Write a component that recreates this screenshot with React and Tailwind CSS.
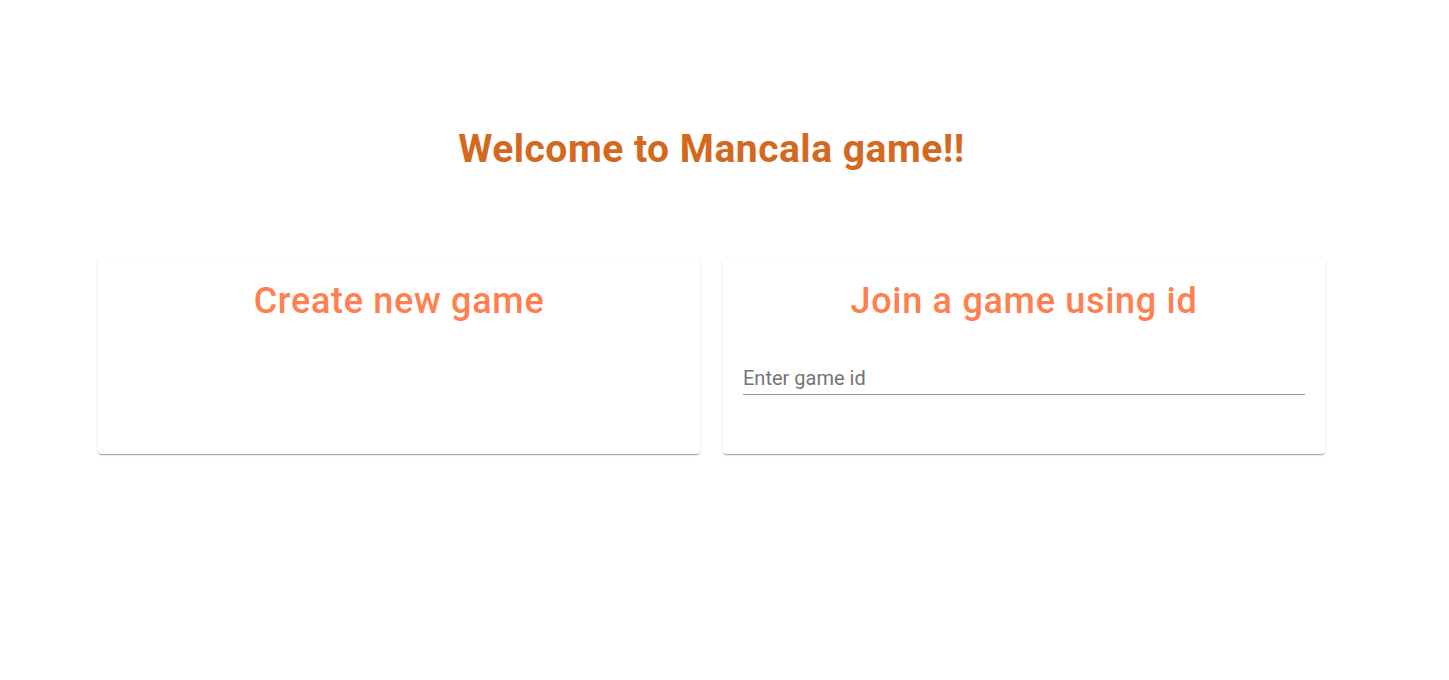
import React from 'react';

const Card = ({ children }) => (
  <div className="flex-1 h-[196px] bg-white rounded shadow-[0_2px_1px_-1px_rgba(0,0,0,0.2),0_1px_1px_0_rgba(0,0,0,0.14),0_1px_3px_0_rgba(0,0,0,0.12)] px-5 pt-[21px]">
    {children}
  </div>
);

export default function App() {
  return (
    <div className="min-h-screen bg-white font-['Roboto',sans-serif]">
      <div className="pt-[121px] pl-[98px] pr-[124px]">
        {/* Title */}
        <h1 className="text-center text-[39px] leading-[56px] font-bold text-[#d2691e] tracking-[0.5px]">
          Welcome to Mancala game!!
        </h1>

        {/* Cards */}
        <div className="flex gap-[23px] mt-[81px]">
          <Card>
            <h2 className="text-center text-[36px] leading-[44px] font-medium tracking-[0.7px] text-[#ff7f50]">Create new game</h2>
          </Card>
          <Card>
            <h2 className="text-center text-[36px] leading-[44px] font-medium tracking-[0.7px] text-[#ff7f50]">Join a game using id</h2>
            <div className="mt-[38px]">
              <input
                type="text"
                placeholder="Enter game id"
                className="w-full h-[34px] border-b border-[#949494] outline-none text-[20px] text-gray-800 placeholder:text-[#757575] bg-transparent"
              />
            </div>
          </Card>
        </div>
      </div>
    </div>
  );
}
